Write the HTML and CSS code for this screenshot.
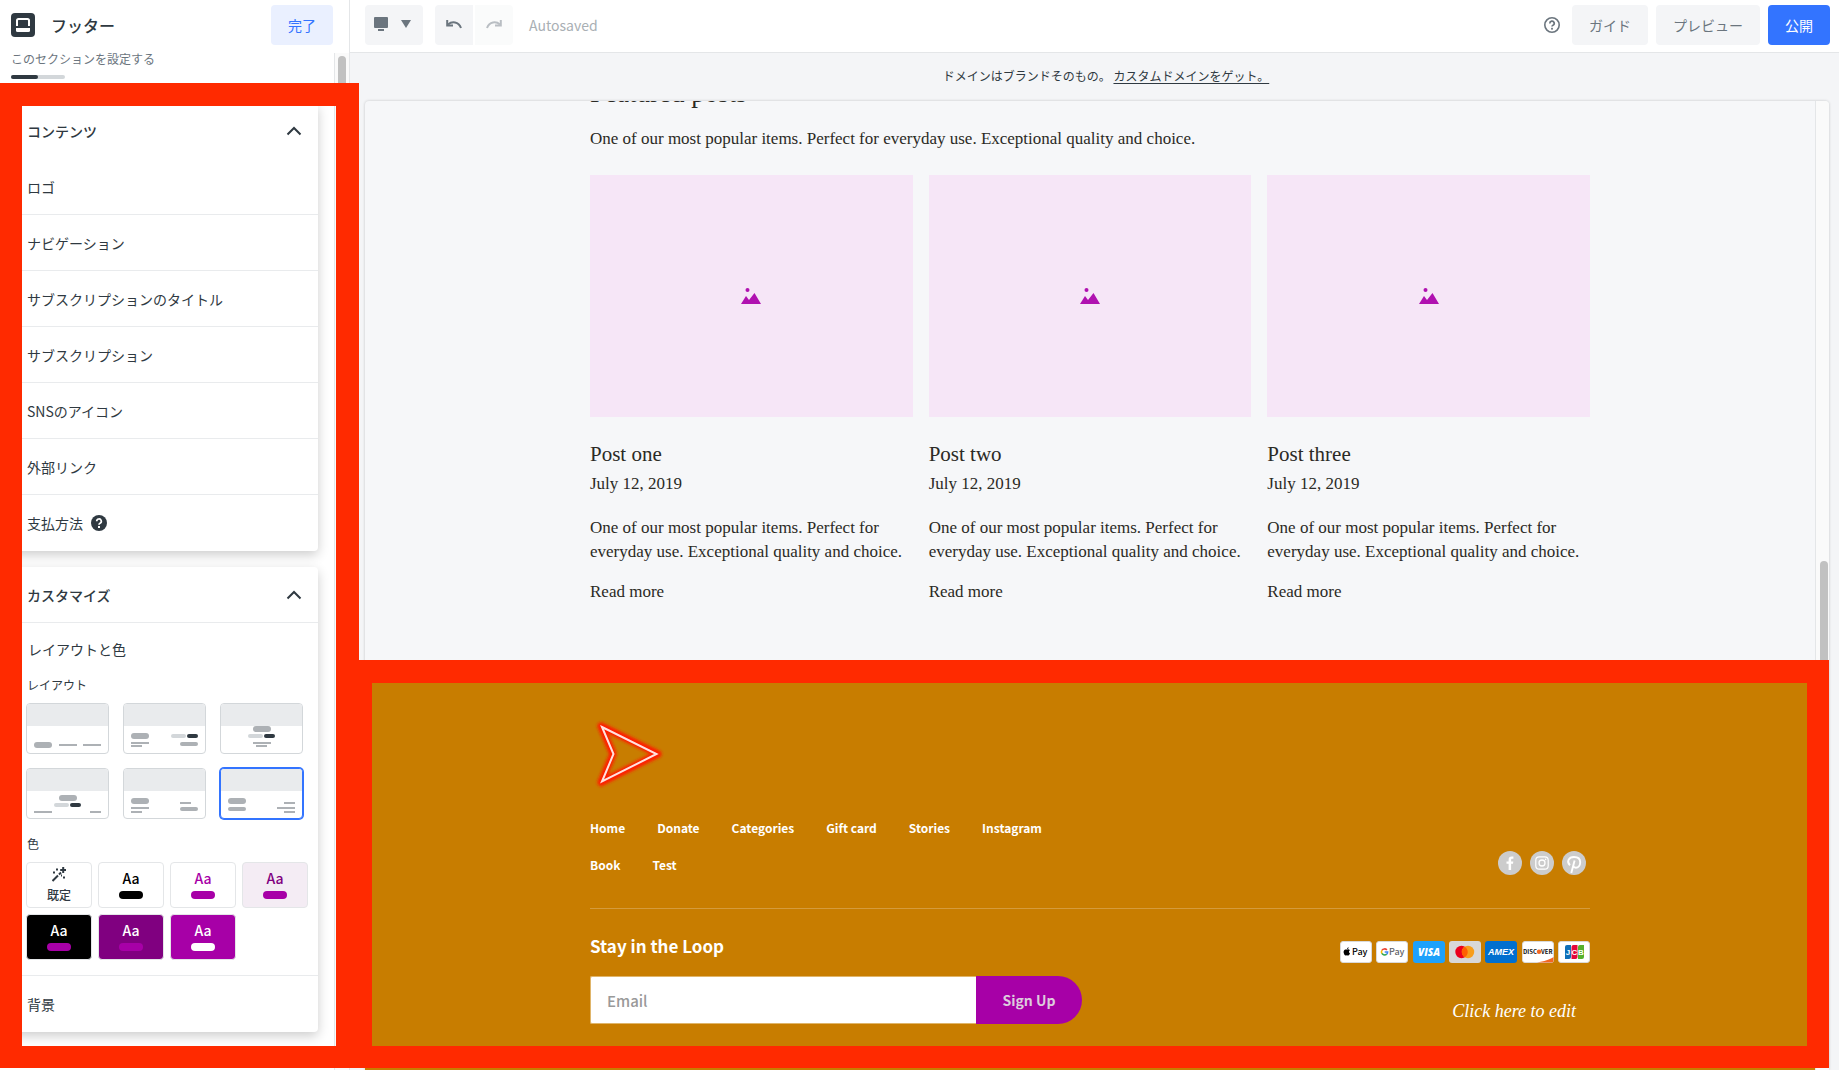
FILE: index.html
```html
<!DOCTYPE html>
<html lang="ja">
<head>
<meta charset="utf-8">
<meta name="viewport" content="width=device-width, initial-scale=1">
<title>フッター</title>
<link rel="stylesheet" href="styles.css">
</head>
<body>
<div class="app">
  <aside class="sidebar">
    <header class="side-head">
      <svg class="side-icon" width="24" height="24" viewBox="0 0 24 24" aria-hidden="true"><rect width="24" height="24" rx="4" fill="#2f3941"/><path d="M6 13V7.500A1.500 1.500 0 0 1 7.500 6h9A1.500 1.500 0 0 1 18 7.500V13" fill="none" stroke="#fff" stroke-width="2"/><path d="M5 15h14v2.500a1.500 1.500 0 0 1-1.500 1.500h-11A1.500 1.500 0 0 1 5 17.500z" fill="#fff"/></svg>
      <h1 class="side-title">フッター</h1>
      <button class="btn btn-done" type="button">完了</button>
    </header>
    <div class="side-body">
      <div class="side-scroll">
        <p class="side-sub">このセクションを設定する</p>
        <div class="steps"><span class="step"></span></div>
        <section class="panel panel-content">
          <button class="panel-head" type="button">コンテンツ
            <svg width="16" height="10" viewBox="0 0 16 10" aria-hidden="true"><path d="M1.500 8.500L8 2l6.500 6.500" fill="none" stroke="#2f3941" stroke-width="2"/></svg>
          </button>
          <ul class="rows">
            <li class="row">ロゴ</li>
            <li class="row">ナビゲーション</li>
            <li class="row">サブスクリプションのタイトル</li>
            <li class="row">サブスクリプション</li>
            <li class="row">SNSのアイコン</li>
            <li class="row">外部リンク</li>
            <li class="row">支払方法
              <svg width="16" height="16" viewBox="0 0 16 16" aria-hidden="true"><circle cx="8" cy="8" r="8" fill="#2f3941"/><path d="M5.700 6.300a2.300 2.300 0 1 1 3.400 2c-.8.450-1.100.7-1.100 1.500" fill="none" stroke="#fff" stroke-width="1.700"/><rect x="7" y="11" width="2" height="2" fill="#fff"/></svg>
            </li>
          </ul>
        </section>
        <section class="panel">
          <button class="panel-head panel-head-line" type="button">カスタマイズ
            <svg width="16" height="10" viewBox="0 0 16 10" aria-hidden="true"><path d="M1.500 8.500L8 2l6.500 6.500" fill="none" stroke="#2f3941" stroke-width="2"/></svg>
          </button>
          <div class="design">
            <h2 class="design-title">レイアウトと色</h2>
            <h3 class="label">レイアウト</h3>
            <div class="layouts">
              <button class="tile" type="button" aria-label="レイアウト1"><svg viewBox="0 0 81 50" aria-hidden="true"><path class="t-bg" d="M0 0h81v22H0z"/><rect class="t-a" x="7" y="38" width="18" height="6" rx="3"/><path class="t-l" d="M32 41h18M56 41h18"/></svg></button>
              <button class="tile" type="button" aria-label="レイアウト2"><svg viewBox="0 0 81 50" aria-hidden="true"><path class="t-bg" d="M0 0h81v22H0z"/><rect class="t-a" x="7" y="29" width="18" height="6" rx="3"/><path class="t-l" d="M7 39h18M7 42h11"/><rect class="t-b" x="47" y="30" width="15" height="4" rx="2"/><rect class="t-d" x="63" y="30" width="11" height="4" rx="2"/><rect class="t-a" x="56" y="38" width="18" height="4" rx="2"/></svg></button>
              <button class="tile" type="button" aria-label="レイアウト3"><svg viewBox="0 0 81 50" aria-hidden="true"><path class="t-bg" d="M0 0h81v22H0z"/><rect class="t-a" x="32" y="22" width="18" height="6" rx="3"/><rect class="t-b" x="27" y="30" width="15" height="4" rx="2"/><rect class="t-d" x="43" y="30" width="11" height="4" rx="2"/><path class="t-l" d="M32 39h18M35 42h11"/></svg></button>
              <button class="tile" type="button" aria-label="レイアウト4"><svg viewBox="0 0 81 50" aria-hidden="true"><path class="t-bg" d="M0 0h81v22H0z"/><rect class="t-a" x="32" y="26" width="18" height="6" rx="3"/><rect class="t-b" x="27" y="34" width="15" height="4" rx="2"/><rect class="t-d" x="43" y="34" width="11" height="4" rx="2"/><path class="t-l" d="M7 43h18M63 43h11"/></svg></button>
              <button class="tile" type="button" aria-label="レイアウト5"><svg viewBox="0 0 81 50" aria-hidden="true"><path class="t-bg" d="M0 0h81v22H0z"/><rect class="t-a" x="7" y="29" width="18" height="6" rx="3"/><path class="t-l" d="M7 39h18M7 43h11M56 34h11"/><rect class="t-a" x="56" y="38" width="18" height="4" rx="2"/></svg></button>
              <button class="tile tile-on" type="button" aria-label="レイアウト6" aria-pressed="true"><svg viewBox="0 0 81 50" aria-hidden="true"><path class="t-bg" d="M0 0h81v22H0z"/><rect class="t-a" x="7" y="29" width="18" height="6" rx="3"/><rect class="t-a" x="7" y="38" width="18" height="4" rx="2"/><path class="t-l" d="M63 34h11M56 39h18M63 43h11"/></svg></button>
            </div>
            <h3 class="label">色</h3>
            <div class="swatches">
              <button class="swatch sw-default" type="button"><svg width="14" height="15" viewBox="0 0 14 15" aria-hidden="true"><path d="M.5 14L6 8.500M7 7.500l2-2" stroke="#2f3941" stroke-width="2"/><path d="M11.200 0v6M8.200 3h6" stroke="#2f3941" stroke-width="2"/><path d="M4 2.500h2M1 5.500h2M11 10.500h2M9 8.500h1" stroke="#2f3941" stroke-width="2"/></svg>既定</button>
              <button class="swatch sw-black-text" type="button">Aa<span class="chip"></span></button>
              <button class="swatch sw-magenta-text" type="button">Aa<span class="chip"></span></button>
              <button class="swatch sw-tint" type="button">Aa<span class="chip"></span></button>
              <button class="swatch sw-black" type="button">Aa<span class="chip"></span></button>
              <button class="swatch sw-purple" type="button">Aa<span class="chip"></span></button>
              <button class="swatch sw-magenta" type="button">Aa<span class="chip"></span></button>
            </div>
          </div>
          <div class="row row-last">背景</div>
        </section>
      </div>
      <div class="track track-side"><span class="thumb thumb-side"></span></div>
    </div>
    <div class="callout callout-side"></div>
  </aside>

  <main class="main">
    <header class="topbar">
      <button class="btn btn-device" type="button" aria-label="デバイス">
        <svg width="15" height="14" viewBox="0 0 15 14" aria-hidden="true"><rect width="14" height="11" rx="1" fill="#6b757e"/><rect x="4" y="12" width="6" height="2" fill="#6b757e"/></svg>
        <svg width="10" height="8" viewBox="0 0 10 8" aria-hidden="true"><path d="M0 0h10L5 8z" fill="#6b757e"/></svg>
      </button>
      <div class="history">
        <button class="btn btn-undo" type="button" aria-label="元に戻す"><svg width="16" height="9" viewBox="0 0 16 9" aria-hidden="true"><path d="M2 4.500C6 1 12.500 1.500 15 8" fill="none" stroke="#6b757e" stroke-width="2"/><path d="M1.200 0v5.500H7" fill="none" stroke="#6b757e" stroke-width="2"/></svg></button>
        <button class="btn btn-redo" type="button" aria-label="やり直す"><svg width="16" height="9" viewBox="0 0 16 9" aria-hidden="true"><path d="M14 4.500C10 1 3.500 1.500 1 8" fill="none" stroke="#b9bec3" stroke-width="2"/><path d="M14.800 0v5.500H9" fill="none" stroke="#b9bec3" stroke-width="2"/></svg></button>
      </div>
      <span class="saved">Autosaved</span>
      <div class="actions">
        <svg class="help" width="16" height="16" viewBox="0 0 16 16" aria-hidden="true"><circle cx="8" cy="8" r="7.200" fill="none" stroke="#6b757e" stroke-width="1.600"/><path d="M5.800 6.400a2.200 2.200 0 1 1 3.200 1.900c-.7.400-1 .7-1 1.300" fill="none" stroke="#6b757e" stroke-width="1.700"/><rect x="7.100" y="10.800" width="1.800" height="1.800" fill="#6b757e"/></svg>
        <button class="btn btn-guide" type="button">ガイド</button>
        <button class="btn btn-preview" type="button">プレビュー</button>
        <button class="btn btn-publish" type="button">公開</button>
      </div>
    </header>
    <p class="promo">ドメインはブランドそのもの。 <a href="#domain">カスタムドメインをゲット。</a></p>
    <div class="canvas">
      <div class="site">
        <section class="posts">
          <h2 class="posts-title">Featured posts</h2>
          <p class="posts-lead">One of our most popular items. Perfect for everyday use. Exceptional quality and choice.</p>
          <div class="cards">
            <article class="card">
              <div class="pic"><svg width="20" height="16" viewBox="0 0 20 16" aria-hidden="true"><circle cx="6.500" cy="2" r="2" fill="#b011b0"/><path d="M0 16L5 8l3 4 5.500-7L20 16z" fill="#b011b0"/></svg></div>
              <h3 class="card-title">Post one</h3>
              <p class="card-date">July 12, 2019</p>
              <p class="card-text">One of our most popular items. Perfect for<br>everyday use. Exceptional quality and choice.</p>
              <a class="card-more" href="#one">Read more</a>
            </article>
            <article class="card">
              <div class="pic"><svg width="20" height="16" viewBox="0 0 20 16" aria-hidden="true"><circle cx="6.500" cy="2" r="2" fill="#b011b0"/><path d="M0 16L5 8l3 4 5.500-7L20 16z" fill="#b011b0"/></svg></div>
              <h3 class="card-title">Post two</h3>
              <p class="card-date">July 12, 2019</p>
              <p class="card-text">One of our most popular items. Perfect for<br>everyday use. Exceptional quality and choice.</p>
              <a class="card-more" href="#two">Read more</a>
            </article>
            <article class="card">
              <div class="pic"><svg width="20" height="16" viewBox="0 0 20 16" aria-hidden="true"><circle cx="6.500" cy="2" r="2" fill="#b011b0"/><path d="M0 16L5 8l3 4 5.500-7L20 16z" fill="#b011b0"/></svg></div>
              <h3 class="card-title">Post three</h3>
              <p class="card-date">July 12, 2019</p>
              <p class="card-text">One of our most popular items. Perfect for<br>everyday use. Exceptional quality and choice.</p>
              <a class="card-more" href="#three">Read more</a>
            </article>
          </div>
        </section>
        <footer class="footer">
          <div class="footer-in">
            <svg class="logo" width="80" height="80" viewBox="0 0 80 80" aria-hidden="true">
              <defs><filter id="glow" x="-20%" y="-20%" width="140%" height="140%"><feGaussianBlur stdDeviation="1.600"/></filter></defs>
              <path d="M11 12L68 40 11 68.500 23 40z" fill="none" stroke="#ff1a00" stroke-width="7" stroke-linejoin="round" filter="url(#glow)"/>
              <path d="M12 13L66.500 40 12 67.500 23.500 40z" fill="none" stroke="#ffe2de" stroke-width="2"/>
            </svg>
            <div class="footer-top">
              <nav class="nav">
                <a href="#home">Home</a><a href="#donate">Donate</a><a href="#categories">Categories</a><a href="#gift">Gift card</a><a href="#stories">Stories</a><a href="#instagram">Instagram</a><a href="#book">Book</a><a href="#test">Test</a>
              </nav>
              <div class="social">
                <a href="#facebook" aria-label="Facebook"><svg width="24" height="24" viewBox="0 0 24 24"><circle cx="12" cy="12" r="12" fill="#ccc"/><path d="M10.600 19v-6.200H8.500v-2.400h2.100V8.700c0-2.100 1.200-3.200 3.100-3.200.7 0 1.300 0 1.700.1v2.200h-1.200c-.9 0-1.100.5-1.100 1.100v1.500h2.200l-.3 2.400h-1.900V19z" fill="#fff"/></svg></a>
                <a href="#instagram" aria-label="Instagram"><svg width="24" height="24" viewBox="0 0 24 24"><circle cx="12" cy="12" r="12" fill="#ccc"/><rect x="5.800" y="5.800" width="12.400" height="12.400" rx="3.400" fill="none" stroke="#fff" stroke-width="1.200"/><circle cx="12" cy="12" r="3" fill="none" stroke="#fff" stroke-width="1.300"/><circle cx="15.600" cy="8.400" r=".8" fill="#fff"/></svg></a>
                <a href="#pinterest" aria-label="Pinterest"><svg width="24" height="24" viewBox="0 0 24 24"><circle cx="12" cy="12" r="12" fill="#ccc"/><path d="M8 14.200C4.300 11 6.500 6 12 6c4 0 6.200 2.300 6.200 5.300 0 3.200-2 5.400-4.300 5.400-1.400 0-2.300-.7-2.600-1.700M12.600 9.500L9.300 22" fill="none" stroke="#fff" stroke-width="1.900"/></svg></a>
              </div>
            </div>
            <div class="footer-bottom">
              <form class="signup">
                <label class="signup-title" for="email">Stay in the Loop</label>
                <div class="signup-row">
                  <input class="email" id="email" type="email" placeholder="Email">
                  <button class="signup-btn" type="button">Sign Up</button>
                </div>
              </form>
              <div class="extras">
                <div class="payments">
                  <svg width="32" height="22" viewBox="0 0 32 22"><rect x=".5" y=".5" width="31" height="21" rx="2.500" fill="#fff" stroke="#d9d9d9"/><path d="M8.200 8.300c-.7 0-1.100.3-1.600.3-.4 0-.9-.3-1.300-.2C3.900 8.500 3 10.500 4 12.800c.4.900.9 1.700 1.500 1.700.5 0 .7-.3 1.400-.3.600 0 .8.300 1.400.3.700 0 1.400-1.300 1.700-2.200-1.300-.5-1.400-2.400-.1-3-.4-.7-1.100-1-1.700-1zM8.600 6.200c-.9.200-1.600.9-1.500 1.900.9 0 1.600-.9 1.500-1.900z" fill="#000"/><text class="pay-pay" x="12" y="14">Pay</text></svg>
                  <svg width="32" height="22" viewBox="0 0 32 22"><rect x=".5" y=".5" width="31" height="21" rx="2.500" fill="#fff" stroke="#d9d9d9"/><g fill="none" stroke-width="1.600"><path d="M10.900 9A3.100 3.100 0 0 0 5.900 9.400" stroke="#ea4335"/><path d="M5.900 9.300a3.100 3.100 0 0 0 0 3.200" stroke="#fbbc04"/><path d="M5.900 12.400a3.100 3.100 0 0 0 4.800.7" stroke="#34a853"/><path d="M10.700 13.200c.6-.6.9-1.400.9-2.200H8.700" stroke="#4285f4"/></g><text class="pay-pay pay-g" x="13" y="14">Pay</text></svg>
                  <svg width="32" height="22" viewBox="0 0 32 22"><rect width="32" height="22" rx="3" fill="#1ea1fb"/><text class="pay-visa" x="16" y="15">VISA</text></svg>
                  <svg width="32" height="22" viewBox="0 0 32 22"><rect width="32" height="22" rx="3" fill="#d8d8d8"/><circle cx="12.500" cy="11" r="6.200" fill="#eb001b"/><circle cx="19" cy="11" r="6.200" fill="#f79e1b"/><path d="M15.750 5.700a6.200 6.200 0 0 1 0 10.600 6.200 6.200 0 0 1 0-10.600z" fill="#ff5f00"/></svg>
                  <svg width="32" height="22" viewBox="0 0 32 22"><rect width="32" height="22" rx="3" fill="#006fcf"/><text class="pay-amex" x="16" y="14">AMEX</text></svg>
                  <svg width="32" height="22" viewBox="0 0 32 22"><rect x=".5" y=".5" width="31" height="21" rx="2.500" fill="#fff" stroke="#d9d9d9"/><path d="M15 21.500C22 20.500 28 18.500 31.500 16v3.500a2 2 0 0 1-2 2z" fill="#f26722"/><text class="pay-disc" x="15" y="13" text-anchor="end">DISC</text><circle cx="17" cy="10.800" r="2.200" fill="#f26722"/><text class="pay-disc" x="19" y="13">VER</text></svg>
                  <svg width="32" height="22" viewBox="0 0 32 22"><rect x=".5" y=".5" width="31" height="21" rx="2.500" fill="#fff" stroke="#d9d9d9"/><path d="M7 18V6a2 2 0 0 1 2-2h4v12a2 2 0 0 1-2 2z" fill="#0e6fb8"/><path d="M13.500 18V6a2 2 0 0 1 2-2h4v12a2 2 0 0 1-2 2z" fill="#e3063a"/><path d="M20 18V6a2 2 0 0 1 2-2h4v12a2 2 0 0 1-2 2z" fill="#55b02c"/><text class="pay-jcb" x="10" y="14">J</text><text class="pay-jcb" x="16.500" y="14">C</text><text class="pay-jcb" x="23" y="14">B</text></svg>
                </div>
                <p class="edit">Click here to edit</p>
              </div>
            </div>
          </div>
        </footer>
      </div>
      <div class="track track-canvas"><span class="thumb thumb-canvas"></span></div>
    </div>
    <div class="callout callout-main"></div>
  </main>
</div>
</body>
</html>
```

FILE: styles.css
```css
* { box-sizing: border-box; }
body, h1, h2, h3, p, ul { margin: 0; padding: 0; }
body {
  font-family: "Noto Sans CJK JP", sans-serif;
  color: #2f3941;
  font-size: 14px;
  background: #f4f5f7;
}
button, input { font-family: inherit; border: 0; margin: 0; padding: 0; color: inherit; }
svg { display: block; flex: none; }

.app { display: flex; height: 100vh; overflow: hidden; }

/* Sidebar */
.sidebar {
  position: relative;
  z-index: 1;
  flex: none;
  width: 350px;
  display: flex;
  flex-direction: column;
  background: #fff;
  border-right: 1px solid #e4e6e8;
}
.side-head { display: flex; align-items: center; gap: 16px; height: 50px; padding: 0 16px 0 11px; flex: none; }
.side-title { flex: 1; font-size: 16px; line-height: 24px; font-weight: 500; }
.btn { height: 40px; padding-bottom: 1px; border-radius: 4px; background: #f4f5f7; font-size: 14px; color: #6b757e; display: flex; align-items: center; justify-content: center; }
.btn-done { width: 62px; background: #eaf0ff; color: #3374ff; }
.side-body { flex: 1; min-height: 0; display: flex; }
.side-scroll { flex: 1; overflow: hidden; }
.side-sub { padding: 0 11px; font-size: 12px; line-height: 18px; color: #6b757e; }
.steps { width: 54px; height: 4px; margin: 7px 11px 0; border-radius: 2px; background: #d3d7da; }
.step { display: block; width: 27px; height: 4px; border-radius: 2px; background: #2f3941; }
.track { flex: none; width: 15px; background: #fafafa; border-left: 1px solid #e4e6e8; padding: 3px 3px; }
.track-side { margin-top: 3px; }
.thumb { display: block; width: 8px; border-radius: 4px; background: #c1c1c1; }
.thumb-side { height: 480px; }

.panel { margin: 0 16px 16px 12px; border-radius: 4px; background: #fff; box-shadow: 0 4px 12px rgba(0, 0, 0, .2); }
.panel-content { margin-top: 24px; }
.panel-head {
  display: flex; align-items: center; justify-content: space-between;
  width: 100%; height: 56px; padding: 0 16px 0 15px; background: none; font-size: 14px; font-weight: 500;
}
.panel-head-line { border-bottom: 1px solid #e9ebed; }
.rows { list-style: none; }
.row { display: flex; align-items: center; gap: 8px; height: 56px; padding: 0 15px; border-bottom: 1px solid #e9ebed; font-size: 14px; }
.row:last-child { border-bottom: 0; }
.design { padding: 16px 9px 15px 14px; border-bottom: 1px solid #e9ebed; }
.design-title { padding-left: 2px; font-size: 14px; line-height: 20px; font-weight: 400; }
.label { padding-left: 1px; font-size: 12px; line-height: 16px; font-weight: 400; }
.design-title + .label { margin-top: 18px; }
.layouts { display: grid; grid-template-columns: repeat(3, 83px); gap: 14px; margin: 10px 0 17px; }
.tile { height: 51px; overflow: hidden; border: 1px solid #d3d7da; border-radius: 4px; background: #fff; }
.tile-on { border-color: #3374ff; box-shadow: 0 0 0 1px #3374ff; }
.t-bg { fill: #e9ebed; }
.t-a { fill: #adb1b5; }
.t-b { fill: #d3d7da; }
.t-d { fill: #2f3941; }
.t-l { fill: none; stroke: #adb1b5; stroke-width: 2; }
.swatches { display: grid; grid-template-columns: repeat(4, 66px); gap: 6px; margin-top: 10px; }
.swatch {
  display: flex; flex-direction: column; align-items: center; justify-content: center; gap: 4px;
  height: 46px; padding-bottom: 2px; border: 1px solid #e4e6e8; border-radius: 4px; background: #fff; font-size: 14px; line-height: 17px; font-weight: 500;
}
.chip { width: 24px; height: 8px; border-radius: 4px; background: #a700a7; }
.sw-default { padding: 0; font-size: 12px; }
.sw-black-text { color: #000; }
.sw-black-text .chip { background: #000; }
.sw-magenta-text { color: #a700a7; }
.sw-tint { background: #f4ecf4; color: #800080; }
.sw-black { background: #000; color: #fff; }
.sw-purple { background: #800080; color: #fff; }
.sw-magenta { background: #a700a7; color: #fff; }
.sw-magenta .chip { background: #fff; }

/* Highlight frames laid over the editor */
.callout { position: absolute; border: 22px solid #ff2a00; pointer-events: none; }
.callout-side { top: 83px; bottom: 2px; left: 0; right: -10px; border-width: 23px 23px 22px 22px; }
.callout-main { top: 660px; bottom: 2px; left: 0; right: 10px; border-top-width: 23px; }

/* Editor */
.main { position: relative; flex: 1; min-width: 0; display: flex; flex-direction: column; }
.topbar { flex: none; display: flex; align-items: center; height: 53px; padding: 0 9px 2px 15px; background: #fff; border-bottom: 1px solid #e4e6e8; }
.btn-device { width: 58px; gap: 12px; padding: 0 3px 2px 0; }
.history { display: flex; gap: 2px; margin: 0 16px 0 12px; }
.btn-undo { width: 38px; border-radius: 4px 0 0 4px; }
.btn-redo { width: 38px; border-radius: 0 4px 4px 0; background: #fafbfb; }
.saved { color: #a9afb4; }
.actions { display: flex; align-items: center; margin-left: auto; gap: 8px; }
.help { margin-right: 4px; }
.btn-guide { width: 76px; }
.btn-preview { width: 104px; }
.btn-publish { width: 62px; background: #3374ff; color: #fff; }
.promo { flex: none; padding: 13px 0 15px 23px; font-size: 12px; line-height: 20px; text-align: center; color: #2f3941; }
.promo a { color: inherit; text-underline-offset: 2px; }
.canvas { flex: 1; min-height: 0; display: flex; margin: 0 10px 0 15px; overflow: hidden; border-radius: 4px 4px 0 0; background: #f6f7f9; box-shadow: 0 0 3px rgba(0, 0, 0, .2); }
.site { flex: 1; min-width: 0; overflow: hidden; color: #2b2a25; font-family: "Source Serif Pro", "Liberation Serif", serif; }
.track-canvas { width: 14px; padding: 460px 3px 0 4px; }
.thumb-canvas { height: 150px; }

.posts { max-width: 1000px; margin: -24px auto 0; font-size: 17px; line-height: 24px; }
.posts-title { font-size: 27px; line-height: 32px; font-weight: 400; }
.posts-lead { margin: 18px 0 24px; }
.cards { display: grid; grid-template-columns: repeat(3, 1fr); gap: 16px; }
.pic { display: flex; align-items: center; justify-content: center; aspect-ratio: 4 / 3; background: #f6e6f7; }
.card-title { margin-top: 23px; font-size: 21px; line-height: 28px; font-weight: 400; }
.card-date { margin: 4px 0 20px; }
.card-text { margin-bottom: 16px; white-space: nowrap; }
.card-more { color: inherit; text-decoration: none; }

.footer { margin-top: 62px; min-height: 420px; background: #c87d00; color: #fff; font-family: "Noto Sans CJK JP", sans-serif; }
.footer-in { max-width: 1000px; margin: 0 auto; padding-top: 48px; }
.footer-top { display: flex; align-items: flex-end; justify-content: space-between; padding: 22px 0 31px; border-bottom: 1px solid #d59b3c; }
.nav { display: flex; flex-wrap: wrap; gap: 13px 32px; max-width: 492px; }
.nav a { color: #fff; font-size: 12px; line-height: 24px; font-weight: 700; text-decoration: none; }
.social { display: flex; gap: 8px; padding: 0 4px 2px 0; }
.footer-bottom { display: flex; justify-content: space-between; padding-top: 24px; }
.signup-title { display: block; font-size: 17px; line-height: 26px; font-weight: 700; }
.signup-row { display: flex; margin-top: 17px; }
.email { width: 386px; height: 48px; padding: 0 16px; border: 1px solid #e0b56a; border-right: 0; border-radius: 2px 0 0 2px; background: #fff; font-size: 15px; font-weight: 500; color: #2b2a25; }
.email::placeholder { color: #999; }
.signup-btn { width: 106px; height: 48px; border-radius: 0 24px 24px 0; background: #a700a7; color: #dcd; font-size: 14px; font-weight: 700; }
.payments { display: flex; justify-content: space-between; width: 250px; margin-top: 8px; }
.edit { margin-top: 36px; padding-right: 14px; text-align: right; font-family: "Source Serif Pro", "Liberation Serif", serif; font-style: italic; font-size: 18px; line-height: 24px; }
.pay-pay { font: 500 9px "Noto Sans CJK JP", sans-serif; fill: #000; }
.pay-g { fill: #5f6368; }
.pay-visa { font: italic 800 10px "Open Sans", sans-serif; fill: #fff; text-anchor: middle; }
.pay-amex { font: italic 700 9px "Liberation Sans", sans-serif; fill: #fff; text-anchor: middle; }
.pay-disc { font: 700 6px "Noto Sans CJK JP", sans-serif; fill: #111; }
.pay-jcb { font: 700 8px "Liberation Sans", sans-serif; fill: #fff; text-anchor: middle; }
```
